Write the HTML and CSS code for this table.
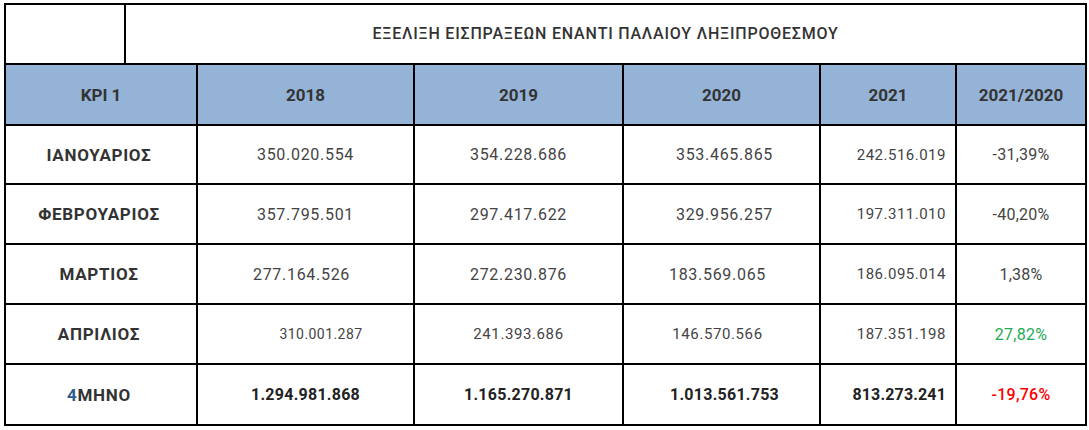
FILE: index.html
```html
<!DOCTYPE html>
<html lang="el">
<head>
<meta charset="utf-8">
<title>ΕΞΕΛΙΞΗ ΕΙΣΠΡΑΞΕΩΝ</title>
<link rel="stylesheet" href="styles.css">
</head>
<body>
<div class="sheet">
  <div class="title-row">
    <div class="cell"></div>
    <div class="cell title">ΕΞΕΛΙΞΗ ΕΙΣΠΡΑΞΕΩΝ ΕΝΑΝΤΙ ΠΑΛΑΙΟΥ ΛΗΞΙΠΡΟΘΕΣΜΟΥ</div>
  </div>
  <div class="grid">
    <div class="cell head">KPI 1</div>
    <div class="cell head">2018</div>
    <div class="cell head">2019</div>
    <div class="cell head">2020</div>
    <div class="cell head">2021</div>
    <div class="cell head">2021/2020</div>

    <div class="cell month">ΙΑΝΟΥΑΡΙΟΣ</div>
    <div class="cell num">350.020.554</div>
    <div class="cell num">354.228.686</div>
    <div class="cell num nudge-right">353.465.865</div>
    <div class="cell num right">242.516.019</div>
    <div class="cell pct">-31,39%</div>

    <div class="cell month">ΦΕΒΡΟΥΑΡΙΟΣ</div>
    <div class="cell num">357.795.501</div>
    <div class="cell num">297.417.622</div>
    <div class="cell num nudge-right">329.956.257</div>
    <div class="cell num right">197.311.010</div>
    <div class="cell pct">-40,20%</div>

    <div class="cell month">ΜΑΡΤΙΟΣ</div>
    <div class="cell num nudge-left">277.164.526</div>
    <div class="cell num">272.230.876</div>
    <div class="cell num nudge-left">183.569.065</div>
    <div class="cell num right">186.095.014</div>
    <div class="cell pct">1,38%</div>

    <div class="cell month">ΑΠΡΙΛΙΟΣ</div>
    <div class="cell num small shift-right">310.001.287</div>
    <div class="cell num tight">241.393.686</div>
    <div class="cell num tight nudge-left">146.570.566</div>
    <div class="cell num right">187.351.198</div>
    <div class="cell pct up">27,82%</div>

    <div class="cell month"><span class="four">4</span>ΜΗΝΟ</div>
    <div class="cell num total">1.294.981.868</div>
    <div class="cell num total">1.165.270.871</div>
    <div class="cell num total nudge-right">1.013.561.753</div>
    <div class="cell num total right">813.273.241</div>
    <div class="cell pct down">-19,76%</div>
  </div>
</div>
</body>
</html>
```
FILE: styles.css
```css
html, body {
  margin: 0;
  padding: 0;
  background: #ffffff;
}

body {
  font-family: Roboto, "Liberation Sans", Arial, sans-serif;
  color: #333333;
}

.sheet {
  margin: 3px 0 0 4px;
  width: 1083px;
  box-sizing: border-box;
  background: #000000;
  padding: 2px;
  display: flex;
  flex-direction: column;
  gap: 2px;
}

.title-row {
  display: grid;
  grid-template-columns: 118px 1fr;
  gap: 2px;
  height: 58px;
}

.grid {
  display: grid;
  grid-template-columns: 190px 215px 207px 195px 134px 128px;
  grid-template-rows: 59px 57px 58px 58px 58px 59px;
  gap: 2px;
}

.cell {
  background: #ffffff;
  display: flex;
  align-items: center;
  justify-content: center;
  font-size: 16px;
  box-sizing: border-box;
}

.title {
  font-size: 16px;
  font-weight: 500;
  color: #333333;
  letter-spacing: 0.8px;
  padding-bottom: 2px;
}

.head {
  background: #95b3d7;
  font-weight: 700;
  font-size: 17px;
  color: #333333;
}

.month {
  font-weight: 700;
  font-size: 17px;
  letter-spacing: 0.7px;
  color: #333333;
  padding-right: 4px;
}

.four {
  color: #2e5c8e;
}

.num {
  color: #444444;
  letter-spacing: 0.7px;
}

.num.small {
  font-size: 14px;
  letter-spacing: 0.45px;
}

.num.tight {
  font-size: 15px;
  letter-spacing: 0.6px;
}

.num.right {
  justify-content: flex-end;
  padding-right: 9px;
  font-size: 15px;
  letter-spacing: 0.5px;
}

.nudge-right {
  padding-left: 6px;
}

.nudge-left {
  padding-right: 8px;
}

.shift-right {
  padding-left: 31px;
}

.total {
  font-weight: 700;
  color: #222222;
  letter-spacing: 0.25px;
}

.num.total.right {
  font-size: 16px;
  letter-spacing: 0.15px;
}

.pct {
  font-size: 16px;
  letter-spacing: 0.25px;
  color: #444444;
}

.pct.up {
  color: #1fa956;
}

.pct.down {
  color: #ff0000;
  font-weight: 500;
}
```
